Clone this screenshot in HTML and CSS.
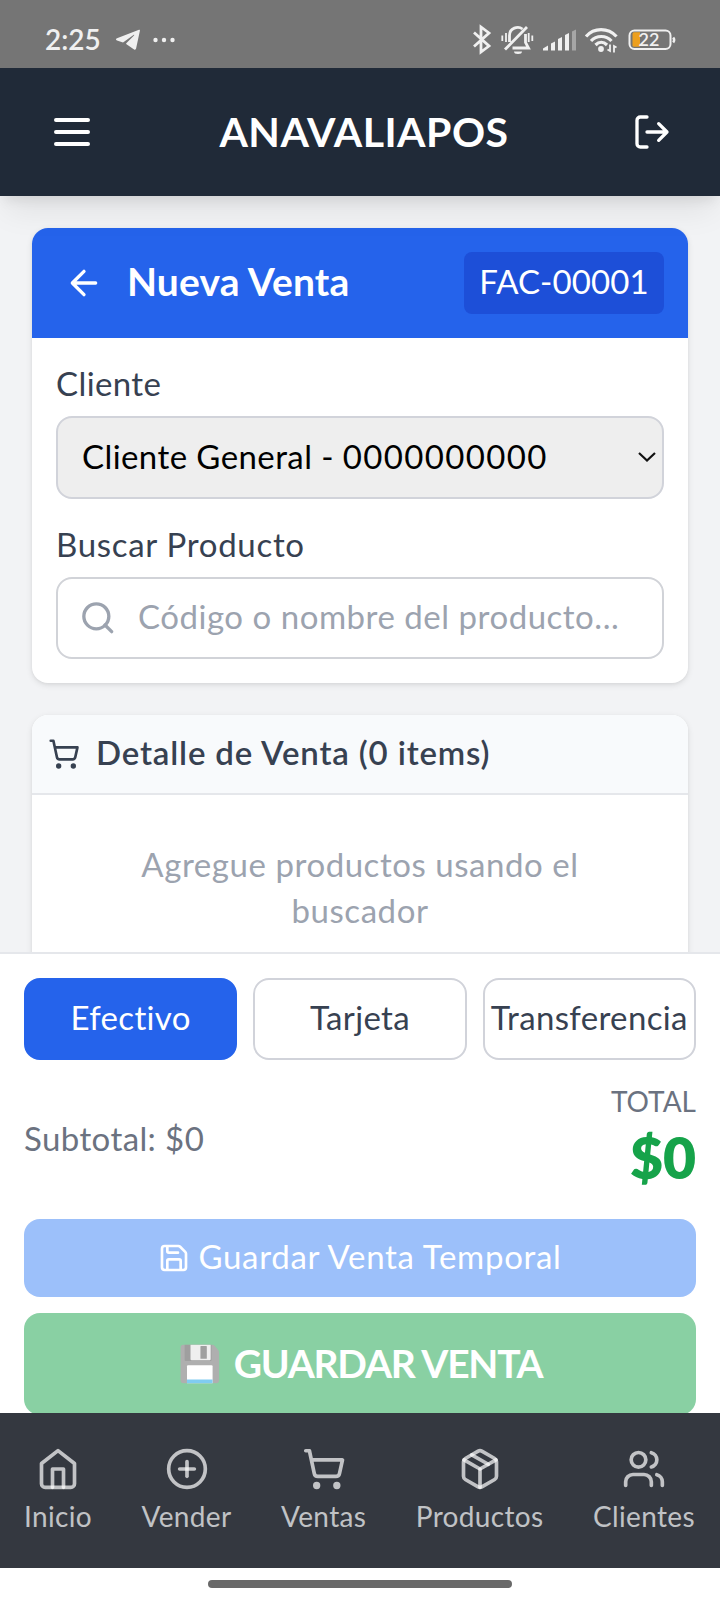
FILE: index.html
```html
<!DOCTYPE html>
<html lang="es">
<head>
<meta charset="utf-8">
<title>ANAVALIAPOS</title>
<link rel="stylesheet" href="styles.css">
</head>
<body>
<div class="screen">
  <div class="statusbar">
    <span class="clock">2:25</span>
    <svg class="telegram" width="26" height="22" viewBox="0 0 26 22" fill="#f0f0f0"><path d="M24 .8 2 9.300C.6 9.900.7 11 2 11.500l6 1.900L18.500 6c.6-.4 1 0 .5.500L11.500 14c-.4.400-.5.900 0 1.300l7.600 5.200c1 .6 1.800.200 2-.9L24.900 1.800C25.100.8 24.800.5 24 .8z"/></svg>
    <svg width="24" height="6" viewBox="0 0 24 6" fill="#f0f0f0"><circle cx="2.500" cy="3" r="2.200"/><circle cx="11" cy="3" r="2.200"/><circle cx="19.500" cy="3" r="2.200"/></svg>
    <svg class="sysicons" width="210" height="40" viewBox="470 19 210 40" fill="none" stroke="#f0f0f0" stroke-width="2.800">
      <path d="M474 31.500 489 45l-8 6V26l8 6-15 13.500"/>
      <path d="M509.500 41v-6.500c0-7.500 8.500-10 13-6.500M505 48.500 527 26M525.500 33v8.500l3 5.500h-16"/>
      <path d="M514 50.500h8a4 2.500 0 0 1-8 0z" fill="#f0f0f0" stroke="none"/>
      <path d="M502.300 34.500v5.500M506 32v9M528.700 32v9M532.300 34.500v5.500" stroke-width="1.800"/>
      <g stroke="none" fill="#f0f0f0"><path d="M543 47.500l5-3V49.500h-5z"/><path d="M551 42.500l4-2v9h-4z"/><path d="M558 38l4-2v13.500h-4z"/><path d="M565 34l4-2v17.500h-4z"/><path d="M572 30.500l4-2v21h-4z" opacity=".4"/></g>
      <path d="M586 35.500c8-9.200 22-9.200 30.500 0M591 40c5.500-6 15-6 20.500 0M595.500 44c3.500-3.500 8-3.500 11.500 0" stroke-width="3.200"/>
      <circle cx="601" cy="48" r="2.900" fill="#f0f0f0" stroke="none"/>
      <path d="M610 43.500v6.500l-2.500-1.500M614 51.500V45l2.500 1.500" stroke-width="1.800"/>
      <rect x="629.500" y="29.500" width="41" height="18.500" rx="5" stroke-width="2"/>
      <path d="M634 31.300h6v14.500h-6q-1.500 0-1.500-1.500V33q0-1.700 1.500-1.700z" fill="#eda01f" stroke="none"/>
      <path d="M673.200 36.500a4 4 0 0 1 0 5" stroke-width="2.400"/>
      <text class="battery-level" x="649" y="45" text-anchor="middle">22</text>
    </svg>
  </div>

  <header class="appbar">
    <svg class="ic" width="48" height="48" viewBox="0 0 24 24"><path d="M4 6h16M4 12h16M4 18h16"/></svg>
    <h1 class="brand">ANAVALIAPOS</h1>
    <svg class="ic" width="40" height="40" viewBox="0 0 24 24"><path d="M9 21H5a2 2 0 0 1-2-2V5a2 2 0 0 1 2-2h4M16 17l5-5-5-5M21 12H9"/></svg>
  </header>

  <main class="content">
    <section class="card">
      <div class="card-top">
        <svg class="ic" width="40" height="40" viewBox="0 0 24 24"><path d="M12 19l-7-7 7-7M19 12H5"/></svg>
        <h2 class="title">Nueva Venta</h2>
        <span class="invoice">FAC-00001</span>
      </div>
      <div class="fields">
        <div class="label">Cliente</div>
        <div class="select">
          <span>Cliente General - <span class="digits">0000000000</span></span>
          <svg width="18" height="12" viewBox="0 0 18 12" fill="none" stroke="#111" stroke-width="2.200"><path d="M1 2l8 7.500L17 2"/></svg>
        </div>
        <div class="label second">Buscar Producto</div>
        <div class="search">
          <svg class="ic" width="40" height="40" viewBox="0 0 24 24"><circle cx="11" cy="11" r="7.500"/><path d="M20.200 20.200l-4-4"/></svg>
          <span>Código o nombre del producto...</span>
        </div>
      </div>
    </section>

    <section class="card detail">
      <div class="detail-top">
        <svg class="ic" width="32" height="32" viewBox="0 0 24 24"><circle cx="8" cy="21" r="1"/><circle cx="19" cy="21" r="1"/><path d="M2.050 2.050h2l2.660 12.420a2 2 0 0 0 2 1.580h9.780a2 2 0 0 0 1.950-1.570l1.650-7.430H5.120"/></svg>
        <h3 class="detail-title">Detalle de Venta (0 items)</h3>
      </div>
      <p class="empty">Agregue productos usando el<br>buscador</p>
    </section>
  </main>

  <section class="checkout">
    <div class="methods">
      <div class="method active">Efectivo</div>
      <div class="method">Tarjeta</div>
      <div class="method">Transferencia</div>
    </div>
    <div class="totals">
      <span class="subtotal">Subtotal: $0</span>
      <div class="total"><div class="total-label">TOTAL</div><div class="total-value">$0</div></div>
    </div>
    <div class="btn temp">
      <svg class="ic" width="32" height="32" viewBox="0 0 24 24"><path d="M15.200 3a2 2 0 0 1 1.400.6l3.800 3.800a2 2 0 0 1 .6 1.400V19a2 2 0 0 1-2 2H5a2 2 0 0 1-2-2V5a2 2 0 0 1 2-2zM17 21v-7a1 1 0 0 0-1-1H8a1 1 0 0 0-1 1v7M7 3v4a1 1 0 0 0 1 1h7"/></svg>
      <span>Guardar Venta Temporal</span>
    </div>
    <div class="btn save"><span class="disk">💾</span><span>GUARDAR VENTA</span></div>
  </section>

  <nav class="tabs">
    <div class="tab"><svg width="44" height="44" viewBox="0 0 24 24"><path d="M3 9l9-7 9 7v11a2 2 0 0 1-2 2H5a2 2 0 0 1-2-2z"/><path d="M9 22V12h6v10"/></svg><span>Inicio</span></div>
    <div class="tab"><svg width="44" height="44" viewBox="0 0 24 24"><circle cx="12" cy="12" r="10"/><path d="M8 12h8"/><path d="M12 8v8"/></svg><span>Vender</span></div>
    <div class="tab"><svg width="44" height="44" viewBox="0 0 24 24"><circle cx="8" cy="21" r="1"/><circle cx="19" cy="21" r="1"/><path d="M2.050 2.050h2l2.660 12.420a2 2 0 0 0 2 1.580h9.780a2 2 0 0 0 1.950-1.570l1.650-7.430H5.120"/></svg><span>Ventas</span></div>
    <div class="tab"><svg width="44" height="44" viewBox="0 0 24 24"><path d="M7.500 4.270l9 5.150"/><path d="M21 8a2 2 0 0 0-1-1.730l-7-4a2 2 0 0 0-2 0l-7 4A2 2 0 0 0 3 8v8a2 2 0 0 0 1 1.730l7 4a2 2 0 0 0 2 0l7-4A2 2 0 0 0 21 16z"/><path d="M3.300 7l8.700 5 8.700-5"/><path d="M12 22V12"/></svg><span>Productos</span></div>
    <div class="tab"><svg width="44" height="44" viewBox="0 0 24 24"><path d="M16 21v-2a4 4 0 0 0-4-4H6a4 4 0 0 0-4 4v2"/><circle cx="9" cy="7" r="4"/><path d="M22 21v-2a4 4 0 0 0-3-3.870"/><path d="M16 3.130a4 4 0 0 1 0 7.750"/></svg><span>Clientes</span></div>
  </nav>
  <div class="gesture"><div class="pill"></div></div>
</div>
</body>
</html>
```
FILE: styles.css
```css
* { box-sizing: border-box; }
body { margin: 0; font-family: Lato, "Noto Sans", sans-serif; font-size: 33px; }
h1, h2, h3, p { margin: 0; }
svg { display: block; flex: none; }
span { white-space: nowrap; }

.screen { width: 720px; height: 1600px; display: flex; flex-direction: column; overflow: hidden; background: #f2f3f5; }
.ic { fill: none; stroke: currentColor; stroke-width: 2; stroke-linecap: round; stroke-linejoin: round; }

.statusbar { flex: none; height: 68px; padding: 11px 40px 0 45px; display: flex; align-items: center; background: #757575; color: #f0f0f0; }
.clock { font-size: 28px; font-weight: 600; width: 70px; line-height: 54px; padding-bottom: 2px; }
.telegram { margin-right: 12px; }
.sysicons { margin-left: auto; }
.battery-level { font-family: Lato, sans-serif; font-size: 18px; font-weight: 600; fill: #f0f0f0; stroke: none; }

.appbar { flex: none; height: 128px; padding: 0 48px; display: flex; align-items: center; justify-content: space-between; background: #202a38; color: #fff; position: relative; z-index: 1; box-shadow: 0 20px 30px -6px rgba(0,0,0,.08), 0 8px 12px -4px rgba(0,0,0,.08); }
.brand { font-size: 41px; font-weight: 700; letter-spacing: .5px; line-height: 128px; }

.content { flex: none; height: 756px; padding: 32px 32px 0; overflow: hidden; display: flex; flex-direction: column; gap: 32px; }
.card { flex: none; border-radius: 16px; background: #fff; overflow: hidden; box-shadow: 0 2px 6px rgba(0,0,0,.1), 0 1px 3px rgba(0,0,0,.04); }
.card-top { height: 110px; padding: 0 24px 0 32px; display: flex; align-items: center; background: #2563eb; color: #fff; }
.title { margin-left: 23px; font-size: 39px; font-weight: 700; letter-spacing: .15px; line-height: 60px; padding-bottom: 5px; }
.invoice { margin-left: auto; width: 200px; height: 62px; border-radius: 8px; background: #1d4fd8; text-align: center; line-height: 58px; letter-spacing: .1px; }

.fields { padding: 25px 24px 24px; display: flex; flex-direction: column; }
.label { line-height: 40px; margin-bottom: 13px; color: #374151; letter-spacing: .4px; }
.second { margin-top: 25px; letter-spacing: .7px; }
.select { height: 83px; border: 2px solid #d1d3da; border-radius: 16px; background: #eee; color: #000; display: flex; align-items: center; justify-content: space-between; padding: 0 6px 2px 24px; letter-spacing: .42px; }
.select > span { padding-bottom: 2px; }
.digits { letter-spacing: 1.350px; }
.search { height: 82px; border: 2px solid #d1d3d8; border-radius: 16px; display: flex; align-items: center; padding: 0 20px 0; color: #9ca3af; letter-spacing: .52px; }
.search span { margin-left: 20px; padding-bottom: 4px; }

.detail { height: 280px; }
.detail-top { height: 80px; padding: 0 16px; display: flex; align-items: center; background: #f8fafc; border-bottom: 2px solid #e5e7eb; color: #374151; }
.detail-title { margin-left: 16px; font-size: 33px; font-weight: 600; letter-spacing: .84px; line-height: 40px; padding-bottom: 5px; }
.empty { padding-top: 46px; line-height: 46px; text-align: center; color: #9ca3af; letter-spacing: .55px; }

.checkout { flex: none; height: 461px; padding: 24px 24px 0; border-top: 2px solid #e5e7eb; background: #fff; overflow: hidden; }
.methods { display: grid; grid-template-columns: repeat(3, 1fr); gap: 16px; }
.method { height: 82px; border: 2px solid #d1d3da; border-radius: 16px; text-align: center; line-height: 75px; color: #374151; letter-spacing: .35px; }
.active { background: #2563eb; border-color: #2563eb; color: #fff; }
.totals { margin: 23px 0 24px; height: 112px; display: flex; align-items: center; justify-content: space-between; color: #6b7280; }
.subtotal { letter-spacing: .4px; padding-bottom: 2px; }
.total { text-align: right; }
.total-label { font-size: 28px; line-height: 36px; }
.total-value { font-size: 57px; font-weight: 800; line-height: 76px; color: #16a34a; }
.btn { border-radius: 16px; display: flex; align-items: center; justify-content: center; color: #fff; opacity: .5; }
.temp { height: 78px; margin-bottom: 16px; background: #3b82f6; gap: 8px; letter-spacing: .7px; }
.temp span { padding-bottom: 5px; }
.save { height: 102px; background: #16a34a; gap: 12px; font-size: 39px; font-weight: 700; letter-spacing: -1.250px; padding-bottom: 3px; }
.disk { font-size: 35px; letter-spacing: 0; }

.tabs { flex: none; height: 155px; padding: 34px 25px 0 24px; display: flex; justify-content: space-between; background: #343840; color: #c0c2c5; }
.tab { display: flex; flex-direction: column; align-items: center; gap: 9px; font-size: 28px; line-height: 32px; letter-spacing: .35px; }
.tab svg { fill: none; stroke: rgba(255,255,255,.7); stroke-width: 2; stroke-linecap: round; stroke-linejoin: round; }
.gesture { flex: none; height: 32px; background: #fff; display: flex; align-items: center; justify-content: center; }
.pill { width: 304px; height: 8px; border-radius: 4px; background: #696969; }
```
